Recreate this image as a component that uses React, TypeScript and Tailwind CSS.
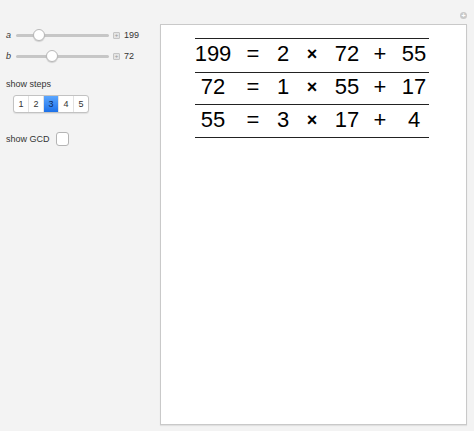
import React from 'react'

const rows = [
  ['199', '=', '2', '×', '72', '+', '55'],
  ['72', '=', '1', '×', '55', '+', '17'],
  ['55', '=', '3', '×', '17', '+', '4'],
]

// column widths chosen so the centres line up with the reference
const colWidths = ['w-[36px]', 'w-[44px]', 'w-[16px]', 'w-[42px]', 'w-[28px]', 'w-[38px]', 'w-[30px]']
const rowHeights = ['h-[34px]', 'h-[32px]', 'h-[33px]']

function Slider({ label, value, thumbLeft }: { label: string; value: string; thumbLeft: string }) {
  return (
    <div className="flex h-[12px] items-center pl-[6px]">
      <span className="w-[10px] text-[9px] italic leading-none text-[#333]">{label}</span>
      <div className="relative h-[12px] w-[93px]">
        <div className="absolute left-0 right-0 top-[4.5px] h-[3px] rounded-full bg-[#c6c6c6]" />
        <div
          className={`absolute top-0 h-[12px] w-[12px] rounded-full border border-[#b8b8b8] bg-white shadow-[0_1px_1px_rgba(0,0,0,0.15)] ${thumbLeft}`}
        />
      </div>
      <div className="ml-[4px] flex h-[7px] w-[7px] items-center justify-center rounded-[1px] border border-[#c4c4c4] bg-[#e4e4e4]">
        <span className="text-[6px] leading-none text-[#999]">+</span>
      </div>
      <span className="ml-[4px] text-[9px] leading-none text-[#333]">{value}</span>
    </div>
  )
}

export default function App() {
  const steps = ['1', '2', '3', '4', '5']
  return (
    <div
      className="flex h-[431px] w-[474px] flex-col bg-[#f3f3f3]"
      style={{ fontFamily: '"Liberation Sans", Arial, sans-serif' }}
    >
      <div className="flex h-[24px] items-start justify-end pr-[7px] pt-[12px]">
        <div className="flex h-[7px] w-[7px] items-center justify-center rounded-full bg-[#c9c9c9]">
          <span className="text-[7px] font-bold leading-none text-white">+</span>
        </div>
      </div>

      <div className="flex">
        {/* controls */}
        <div className="flex w-[160px] flex-col">
          <div className="mt-[5px]">
            <Slider label="a" value="199" thumbLeft="left-[17px]" />
          </div>
          <div className="mt-[9px]">
            <Slider label="b" value="72" thumbLeft="left-[30px]" />
          </div>

          <div className="mt-[17px] pl-[6px] text-[9px] leading-[11px] text-[#333]">show steps</div>

          <div className="ml-[13px] mt-[5px] flex h-[18px] w-[76px] overflow-hidden rounded-[3px] border border-[#c2c2c2] bg-white shadow-[0_1px_1px_rgba(0,0,0,0.08)]">
            {steps.map((s, i) => (
              <div
                key={s}
                className={`flex flex-1 items-center justify-center text-[9px] leading-none ${
                  i > 0 ? 'border-l border-[#e2e2e2]' : ''
                } ${s === '3' ? 'bg-gradient-to-b from-[#5aa6ff] to-[#1b70e8] text-[#0c2a5a]' : 'text-[#333]'}`}
              >
                {s}
              </div>
            ))}
          </div>

          <div className="mt-[19px] flex items-center pl-[6px]">
            <span className="text-[9px] leading-none text-[#333]">show GCD</span>
            <div className="ml-[6px] h-[14px] w-[13px] rounded-[3px] border border-[#b4b4b4] bg-white" />
          </div>
        </div>

        {/* output panel */}
        <div className="h-[401px] w-[307px] border border-[#c9c9c9] bg-white shadow-[0_1px_1px_rgba(0,0,0,0.08)]">
          <div className="ml-[34px] mt-[13px] w-[234px] border-t border-[#222]">
            {rows.map((r, ri) => (
              <div key={ri} className={`flex items-center border-b border-[#222] pb-[3px] ${rowHeights[ri]}`}>
                {r.map((c, ci) => (
                  <div
                    key={ci}
                    className={`flex justify-center leading-none text-black ${colWidths[ci]} ${
                      c === '×' ? 'text-[18px] font-bold' : 'text-[22px]'
                    }`}
                  >
                    {c}
                  </div>
                ))}
              </div>
            ))}
          </div>
        </div>
      </div>
    </div>
  )
}
